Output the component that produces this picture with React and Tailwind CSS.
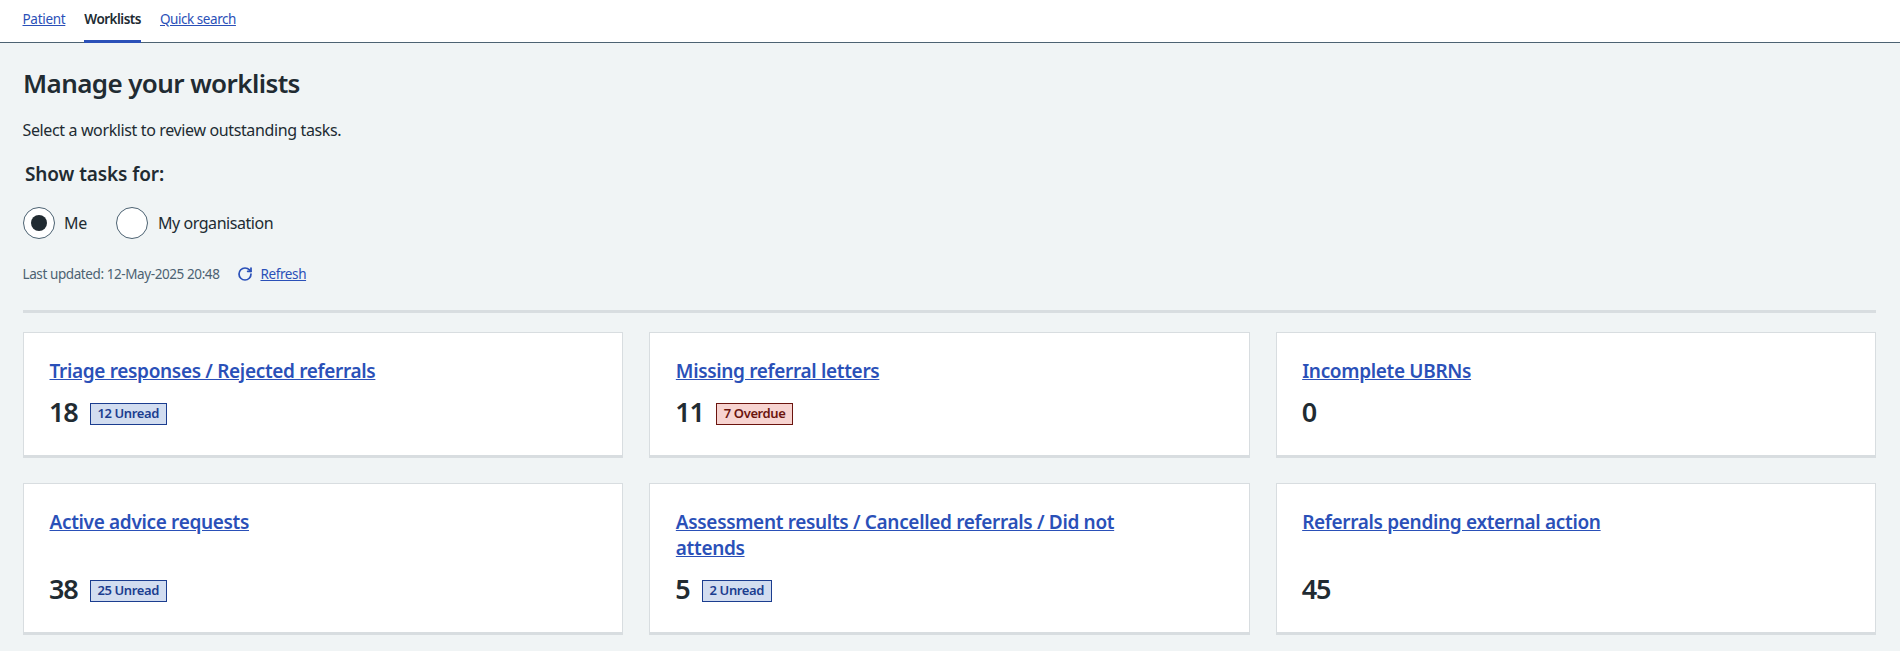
import React from "react";
import { RotateCw } from "lucide-react";

const font = "font-['Noto_Sans',sans-serif]";

function Badge({ kind, children }) {
  const cls =
    kind === "red"
      ? "bg-[#f7d4d1] border-[#6b140e] text-[#6b140e]"
      : "bg-[#d2ddf0] border-[#1b3d8f] text-[#1b3d8f]";
  return (
    <span className={`inline-flex items-center h-[22px] mt-[3px] px-[7px] border text-[13px] font-semibold tracking-[-0.4px] ${cls}`}>
      {children}
    </span>
  );
}

function Card({ title, count, badge, kind, wrap }) {
  return (
    <div className="flex flex-col justify-between bg-white border border-[#d8dde0] border-b-[3px] border-b-[#d8dde0] pl-[25px] pr-[25px] pt-[25px] pb-[29px]">
      <a href="#" className={`text-[#2a50b8] underline text-[19px] leading-[26px] font-semibold tracking-[-0.33px] ml-[0.5px] ${wrap ? "max-w-[470px]" : ""}`}>
        {title}
      </a>
      <div className="flex items-center h-[28px] mt-[14px] text-[#212b32]">
        <span className="text-[27px] font-semibold tracking-[-1.2px] leading-[28px] mr-[12px]">{count}</span>
        {badge && <Badge kind={kind}>{badge}</Badge>}
      </div>
    </div>
  );
}

export default function App() {
  return (
    <div className={`min-h-screen bg-[#f0f4f5] text-[#212b32] ${font}`}>
      <nav className="flex h-[43px] bg-white border-b border-[#4c6272] pl-[22.5px] gap-[19px] text-[13.5px]">
        <a href="#" className="text-[#2a50b8] underline pt-[9px] tracking-[-0.3px]">Patient</a>
        <span className="font-semibold pt-[9px] h-[43px] border-b-[3px] border-[#2a50b8] tracking-[-0.5px]">Worklists</span>
        <a href="#" className="text-[#2a50b8] underline pt-[9px] tracking-[-0.45px]">Quick search</a>
      </nav>
      <main className="pl-[23px] pr-[24px]">
        <h1 className="text-[26px] leading-[34px] font-semibold mt-[23px] tracking-[-0.6px]">Manage your worklists</h1>
        <p className="text-[16px] leading-[24px] mt-[18px] -ml-[0.5px] tracking-[-0.37px]">Select a worklist to review outstanding tasks.</p>
        <h2 className="text-[19px] leading-[26px] font-semibold mt-[19px] ml-[2px] tracking-[-0.1px]">Show tasks for:</h2>
        <div className="flex items-center mt-[20px] h-[32px] text-[16px]">
          <span className="flex items-center justify-center w-[32px] h-[32px] rounded-full bg-white border border-[#4c6272]">
            <span className="w-[16px] h-[16px] rounded-full bg-[#212b32]" />
          </span>
          <span className="ml-[9px] tracking-[-0.3px]">Me</span>
          <span className="ml-[29px] w-[32px] h-[32px] rounded-full bg-white border border-[#4c6272]" />
          <span className="ml-[10px] tracking-[-0.44px]">My organisation</span>
        </div>
        <div className="flex items-center mt-[25px] h-[20px] -ml-[0.5px] text-[13.5px]">
          <span className="text-[#4c6272] tracking-[-0.41px]">Last updated: 12-May-2025 20:48</span>
          <RotateCw className="ml-[18px] w-[16px] h-[16px] text-[#2a50b8]" strokeWidth={2.6} />
          <a href="#" className="ml-[7px] text-[#2a50b8] underline tracking-[-0.4px]">Refresh</a>
        </div>
        <hr className="border-0 h-[3px] bg-[#d8dde0] mt-[26px]" />
        <div className="grid grid-cols-3 gap-x-[26px] gap-y-[25px] mt-[19px]">
          <Card title="Triage responses / Rejected referrals" count="18" badge="12 Unread" />
          <Card title="Missing referral letters" count="11" badge="7 Overdue" kind="red" />
          <Card title="Incomplete UBRNs" count="0" />
          <Card title="Active advice requests" count="38" badge="25 Unread" />
          <Card title="Assessment results / Cancelled referrals / Did not attends" count="5" badge="2 Unread" wrap />
          <Card title="Referrals pending external action" count="45" />
        </div>
      </main>
    </div>
  );
}
